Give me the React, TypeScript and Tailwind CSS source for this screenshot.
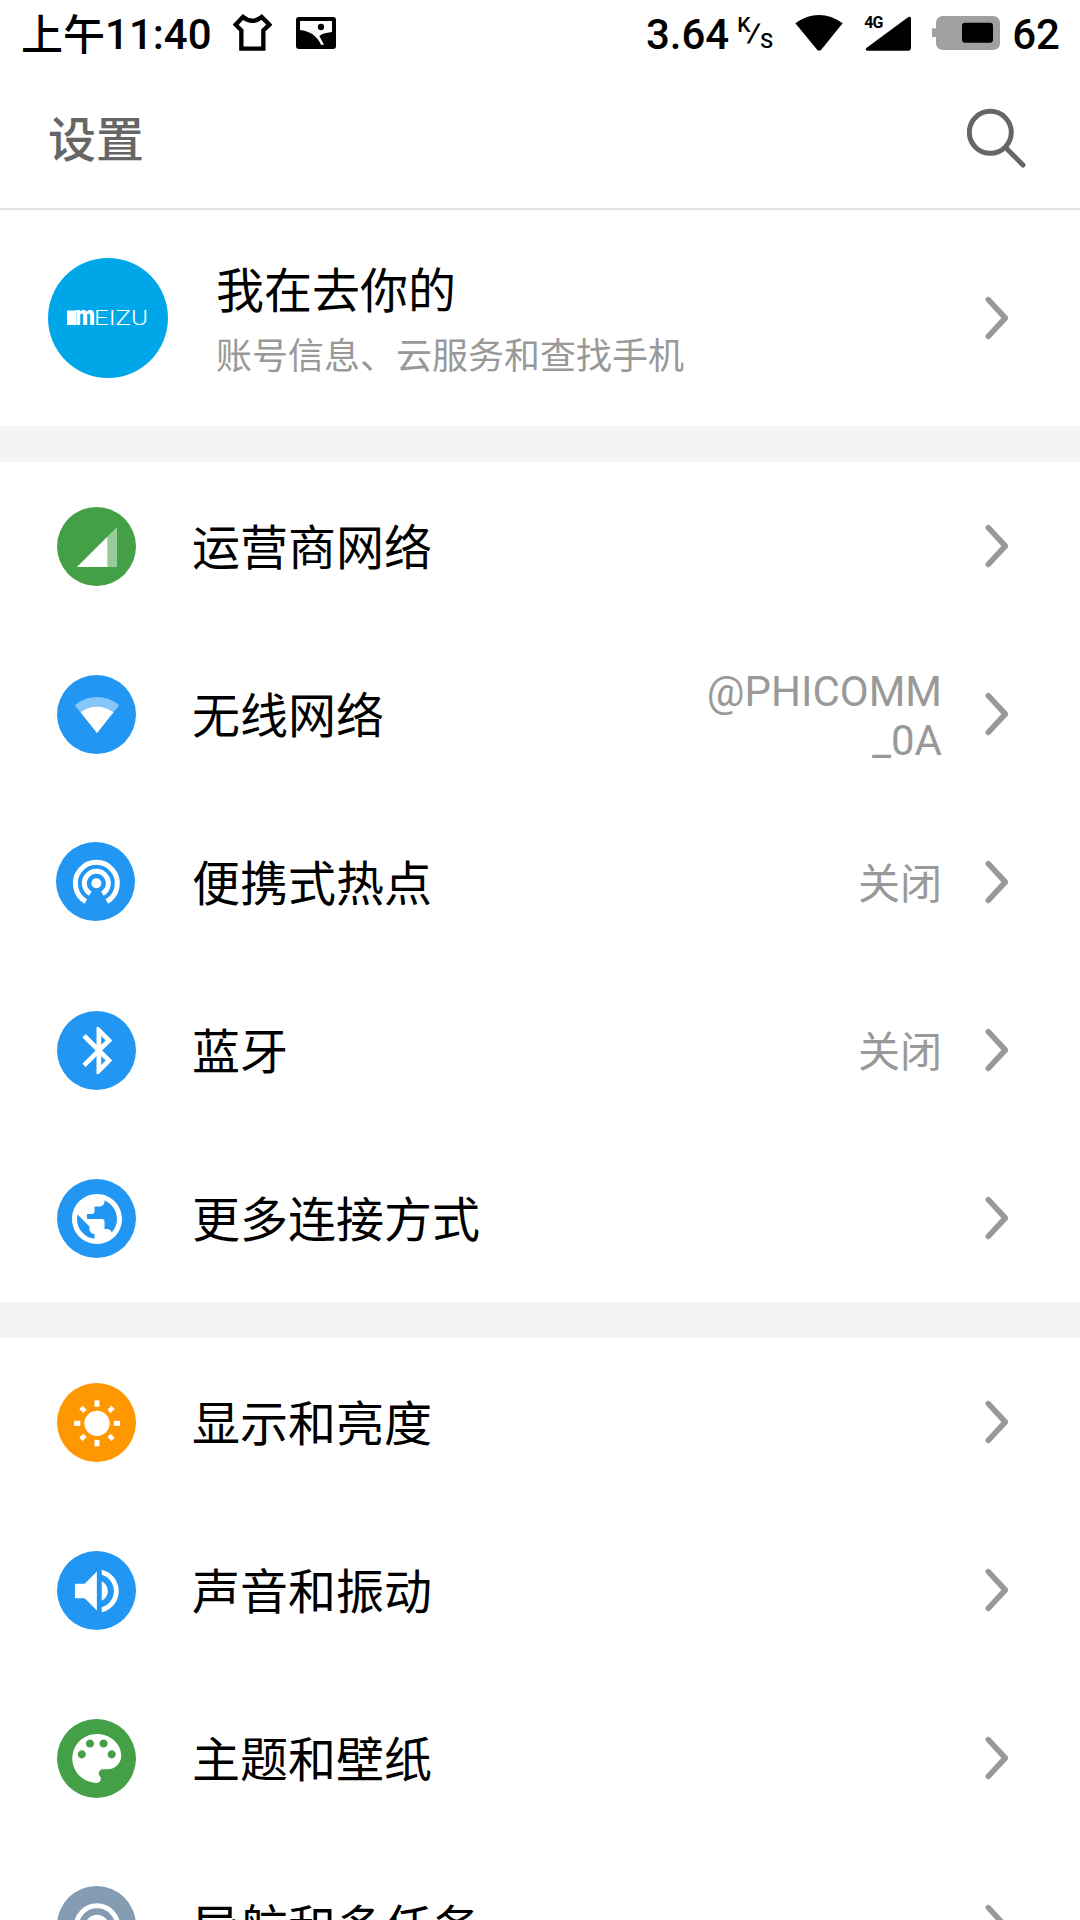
import type { ReactNode } from 'react';

interface SettingItem {
  key: string;
  label: string;
  value?: string;
  color: string;
  icon: ReactNode;
  iconClass?: string;
}

const signalIcon = (
  <>
    <path d="M180 60V180H60Z" opacity="0.45" />
    <path d="M151 90V180H60Z" />
  </>
);

const wifiIcon = (
  <>
    <path d="M120 174L53 91Q83 66 120 66T187 91Z" opacity="0.45" />
    <path d="M120 174L71 112Q92 95 120 95T169 112Z" />
  </>
);

const hotspotIcon = (
  <>
    <circle cx="121" cy="124" r="15" />
    <g fill="none" stroke="#fff" strokeWidth="15">
      <path d="M103 155A36 36 0 1 1 139 155" />
      <path d="M89.5 178.6A63 63 0 1 1 152.5 178.6" />
    </g>
  </>
);

const bluetoothIcon = (
  <path
    transform="translate(41 34) scale(7.05)"
    d="M17.71 7.71L12 2h-1v7.59L6.41 5 5 6.41 10.59 12 5 17.59 6.41 19 11 14.41V22h1l5.71-5.71-4.3-4.29 4.3-4.29zM13 5.83l1.88 1.88L13 9.59V5.83zm1.88 10.46L13 18.17v-3.76l1.88 1.88z"
  />
);

const globeIcon = (
  <path
    transform="translate(30 30) scale(7.5)"
    d="M12 2C6.48 2 2 6.48 2 12s4.48 10 10 10 10-4.48 10-10S17.52 2 12 2zm-1 17.93c-3.95-.49-7-3.85-7-7.93 0-.62.08-1.21.21-1.79L9 15v1c0 1.1.9 2 2 2v1.93zm6.9-2.54c-.26-.81-1-1.39-1.9-1.39h-1v-3c0-.55-.45-1-1-1H8v-2h2c.55 0 1-.45 1-1V7h2c1.1 0 2-.9 2-2v-.41c2.93 1.19 5 4.06 5 7.41 0 2.08-.8 3.97-2.1 5.39z"
  />
);

const sunIcon = (
  <>
    <circle cx="120" cy="121" r="38" />
    {[0, 90, 180, 270].map(a => (
      <rect key={a} x="112.5" y="52" width="15" height="19" transform={`rotate(${a} 120 121)`} />
    ))}
    {[45, 135, 225, 315].map(a => (
      <rect key={a} x="113" y="53" width="14" height="17" transform={`rotate(${a} 120 121)`} />
    ))}
  </>
);

const volumeIcon = (
  <path
    transform="translate(32 32.4) scale(7.3)"
    d="M3 9v6h4l5 5V4L7 9H3zm13.5 3c0-1.77-1.02-3.29-2.5-4.03v8.05c1.48-.73 2.5-2.25 2.5-4.02zM14 3.23v2.06c2.89.86 5 3.54 5 6.71s-2.11 5.85-5 6.71v2.06c4.01-.91 7-4.49 7-8.77s-2.99-7.86-7-8.77z"
  />
);

const paletteIcon = (
  <path
    transform="translate(21.5 20.5) scale(8.15)"
    d="M12 3c-4.97 0-9 4.03-9 9s4.03 9 9 9c.83 0 1.5-.67 1.5-1.5 0-.39-.15-.74-.39-1.01-.23-.26-.38-.61-.38-.99 0-.83.67-1.5 1.5-1.5H16c2.76 0 5-2.24 5-5 0-4.42-4.03-8-9-8zm-5.5 9c-.83 0-1.5-.67-1.5-1.5S5.67 9 6.5 9 8 9.67 8 10.5 7.33 12 6.5 12zm3-4C8.67 8 8 7.33 8 6.5S8.67 5 9.5 5s1.5.67 1.5 1.5S10.33 8 9.5 8zm5 0c-.83 0-1.5-.67-1.5-1.5S13.67 5 14.5 5s1.5.67 1.5 1.5S15.33 8 14.5 8zm3 4c-.83 0-1.5-.67-1.5-1.5S16.67 9 17.5 9s1.5.67 1.5 1.5-.67 1.5-1.5 1.5z"
  />
);

const navIcon = (
  <>
    <circle cx="120" cy="122" r="62.5" fill="none" stroke="#fff" strokeWidth="15" />
    <circle cx="120" cy="122" r="36" />
  </>
);

const network: SettingItem[] = [
  { key: 'carrier', label: '运营商网络', color: 'bg-[#43a047]', icon: signalIcon },
  { key: 'wifi', label: '无线网络', value: '@PHICOMM\n_0A', color: 'bg-[#2196f3]', icon: wifiIcon },
  {
    key: 'hotspot',
    label: '便携式热点',
    value: '关闭',
    color: 'bg-[#2196f3]',
    icon: hotspotIcon,
    iconClass: 'pb-0.5 -ml-px mr-px',
  },
  { key: 'bluetooth', label: '蓝牙', value: '关闭', color: 'bg-[#2196f3]', icon: bluetoothIcon },
  { key: 'more', label: '更多连接方式', color: 'bg-[#2196f3]', icon: globeIcon },
];

const device: SettingItem[] = [
  { key: 'display', label: '显示和亮度', color: 'bg-[#ff9800]', icon: sunIcon },
  { key: 'sound', label: '声音和振动', color: 'bg-[#2196f3]', icon: volumeIcon },
  { key: 'theme', label: '主题和壁纸', color: 'bg-[#43a047]', icon: paletteIcon },
  { key: 'nav', label: '导航和多任务', color: 'bg-[#839cb2]', icon: navIcon, iconClass: 'pb-0.5' },
];

function Chevron() {
  return (
    <svg
      className="h-12 w-6 shrink-0"
      viewBox="0 0 24 48"
      fill="none"
      stroke="#999"
      strokeWidth="5.6"
      strokeLinecap="round"
      strokeLinejoin="round"
    >
      <path d="M4.3 5.6L21.3 24L4.3 42.4" />
    </svg>
  );
}

function StatusBar() {
  return (
    <div className="flex h-[66px] items-center pl-[21px] text-[42px] leading-[62px] font-medium text-black">
      <span className="w-[212px] pt-1 whitespace-nowrap">
        <span className="relative top-px">上午</span>11:40
      </span>
      <svg className="h-[38px] w-[39px]" viewBox="699 42 117 114">
        <path
          d="M729 51Q757 74 785 51L808 74L790 91V146H724V91L707 74Z"
          fill="none"
          stroke="#000"
          strokeWidth="13"
        />
      </svg>
      <svg className="ml-6 h-8 w-10" viewBox="888 51 120 96">
        <rect x="888" y="51" width="120" height="96" rx="9" />
        <path d="M900 63H996V96Q966 99 958 108L972 134H963Q944 94 900 90Z" fill="#fff" />
        <circle cx="963" cy="81" r="9.5" />
      </svg>

      <span className="ml-auto pt-1">3.64</span>
      <span className="ml-[8px] flex w-[37px] items-center text-[21px] leading-5">
        <span className="-mt-4 w-3">K</span>
        <span className="w-[10px] -skew-x-12 text-center text-[26px] font-bold">/</span>
        <span className="mt-[16px] ml-px">S</span>
      </span>
      <svg className="ml-[21px] h-9 w-12" viewBox="526 43 142 108">
        <path d="M592 148L526 68Q560 43 597 43T668 68L603 148Q597 153 592 148Z" />
      </svg>
      <span className="relative ml-[22px] h-[35px] w-[47px]">
        <svg className="h-[35px] w-[47px]" viewBox="735 46 141 105">
          <path d="M741 150Q734 147 739 142L862 51Q873 44 873 54V141Q873 150 864 150Z" />
        </svg>
        <span className="absolute -top-px -left-px text-[16px] leading-[16px] font-bold tracking-[-1px]">4G</span>
      </span>
      <svg className="ml-[20px] h-[34px] w-[68px]" viewBox="936 49 204 102">
        <rect x="936" y="86" width="20" height="26" fill="#a0a0a0" />
        <rect x="948" y="49" width="192" height="102" rx="20" fill="#a0a0a0" />
        <rect x="1026" y="69" width="93" height="60" rx="9" />
      </svg>
      <span className="mr-5 ml-3 pt-1">62</span>
    </div>
  );
}

function Row({ item }: { item: SettingItem }) {
  return (
    <div className="flex h-[168px] items-center pr-[72px] pl-[57px]">
      <div className={item.iconClass}>
        <div className={`mt-px size-[79px] overflow-hidden rounded-full ${item.color}`}>
          <svg className="size-[79px]" viewBox="0 0 237 237" fill="#fff">
            {item.icon}
          </svg>
        </div>
      </div>
      <span className="ml-14 flex-1 pt-1.5 text-5xl text-black">{item.label}</span>
      {item.value && (
        <span className="pt-1 text-right text-[42px] leading-[49px] whitespace-pre-line text-[#999]">
          {item.value}
        </span>
      )}
      <span className="ml-[42px]">
        <Chevron />
      </span>
    </div>
  );
}

export default function App() {
  return (
    <div className="h-[1920px] w-[1080px] overflow-hidden bg-white font-[Roboto,'Noto_Sans_CJK_SC',sans-serif]">
      <StatusBar />
      <header className="flex h-36 items-center justify-between border-b-2 border-[#e4e4e4] pr-[53px] pl-12">
        <h1 className="pt-2 text-5xl font-medium text-[#666]">设置</h1>
        <svg
          className="mt-0.5 size-[60px]"
          viewBox="967 108 60 60"
          fill="none"
          stroke="#666"
          strokeWidth="5"
          strokeLinecap="round"
        >
          <circle cx="990.3" cy="132.3" r="21" />
          <path d="M1006 148L1023 165" />
        </svg>
      </header>

      <section className="flex h-[216px] items-center pr-[72px] pl-12">
        <div className="flex size-[120px] items-center justify-center rounded-full bg-[#00a7e8]">
          <svg className="h-10 w-[90px]" viewBox="-4 -12 90 40" fill="#fff">
            <rect x="0" y="0.5" width="9" height="14.5" />
            <text x="8" y="15" fontSize="27" fontWeight="900" textLength="20" lengthAdjust="spacingAndGlyphs">
              m
            </text>
            <text x="27" y="15" fontSize="20" fontWeight="300" textLength="54" lengthAdjust="spacingAndGlyphs">
              EIZU
            </text>
          </svg>
        </div>
        <div className="ml-12 flex-1 pt-[13px]">
          <div className="text-5xl leading-[66px] text-black">我在去你的</div>
          <div className="text-4xl leading-[65px] text-[#999]">账号信息、云服务和查找手机</div>
        </div>
        <Chevron />
      </section>

      <div className="h-9 bg-[#f4f4f4]" />
      {network.map(item => (
        <Row key={item.key} item={item} />
      ))}
      <div className="h-9 bg-[#f4f4f4]" />
      {device.map(item => (
        <Row key={item.key} item={item} />
      ))}
    </div>
  );
}
